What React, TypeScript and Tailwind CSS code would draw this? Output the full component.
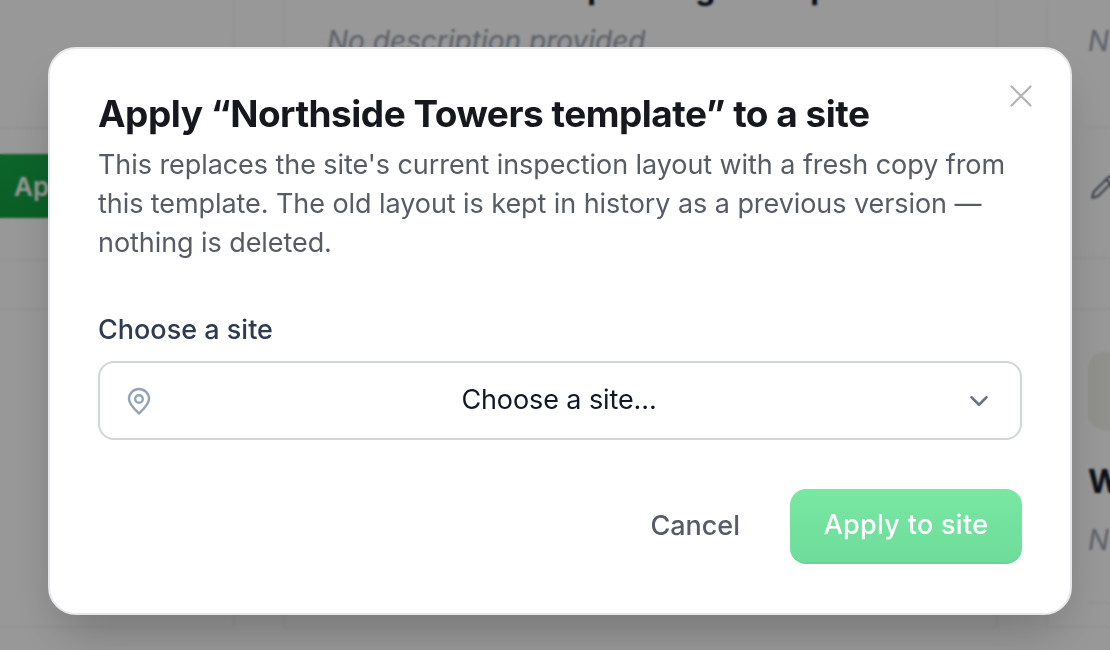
import { ChevronDown, Pencil, X } from 'lucide-react';

const FONT = 'font-["Inter",sans-serif]';

function PinIcon() {
  return (
    <svg viewBox="0 0 24 28" fill="none" stroke="currentColor" strokeWidth="2.4" className="w-[24px] h-[28px] text-[#94a3b8]">
      <path d="M12 26.5c-1-1.2-10-8.6-10-14.5a10 10 0 0 1 20 0c0 5.900-9 13.300-10 14.500Z" strokeLinejoin="round" />
      <circle cx="12" cy="12" r="3.800" />
    </svg>
  );
}

function BackgroundPage() {
  return (
    <div className="h-[650px] overflow-hidden bg-[#fdfdfd] grid grid-cols-[235px_715px_1fr] gap-x-[48px] items-start">
      <div className="flex flex-col">
        <div className="h-[129px] border-b-2 border-r-2 border-gray-100" />
        <div className="h-[132px] border-b-2 border-r-2 border-gray-100 pt-[25px]">
          <span className="flex items-center h-[64px] w-[120px] bg-gradient-to-b from-[#15a846] to-[#129c40] rounded-r-xl px-[14px] text-[26px] font-semibold text-white">Apply</span>
        </div>
        <div className="h-[47px]" />
        <div className="h-[320px] border-y-2 border-r-2 border-gray-100" />
      </div>
      <div className="flex flex-col">
        <div className="h-[261px] border-x-2 border-b-2 border-gray-100 px-[42px]">
          <p className="-mt-[30px] text-[32px] leading-[36px] font-bold text-gray-900 whitespace-nowrap">Harbor Lane Shop Dining and Spa</p>
          <p className="mt-[17px] text-[28px] leading-[36px] italic text-gray-400 whitespace-nowrap">No description provided</p>
        </div>
        <div className="h-[47px]" />
        <div className="h-[320px] border-x-2 border-y-2 border-gray-100" />
      </div>
      <div className="flex flex-col">
        <div className="h-[259px] border-l-2 border-b-2 border-gray-100 rounded-bl-2xl pl-[40px] flex flex-col">
          <p className="mt-[23px] text-[28px] leading-[36px] italic text-gray-400 whitespace-nowrap">No description</p>
          <div className="mt-[67px] border-t-2 border-gray-100 pt-[46px]">
            <Pencil className="w-[26px] h-[26px] ml-[2px] text-gray-500" />
          </div>
        </div>
        <div className="h-[49px]" />
        <div className="h-[320px] border-l-2 border-y-2 border-gray-100 pl-[40px] pt-[42px] flex flex-col">
          <div className="w-[80px] h-[78px] rounded-2xl bg-[#f0f0ea]" />
          <p className="mt-[32px] text-[32px] leading-[40px] font-bold text-gray-900 whitespace-nowrap">Westside</p>
          <p className="mt-[20px] text-[28px] leading-[36px] italic text-gray-400 whitespace-nowrap">No description</p>
          <div className="mt-[44px] border-t-2 border-gray-100" />
        </div>
      </div>
    </div>
  );
}

export default function App() {
  return (
    <div className={`relative h-[650px] w-[1110px] overflow-hidden ${FONT}`}>
      <BackgroundPage />
      <div className="absolute inset-0 bg-black/40 backdrop-blur-[1px] flex items-start justify-center pt-[47px] pl-[10px]">
        <div className="relative w-[1024px] h-[568px] bg-white rounded-[28px] border-2 border-gray-200 shadow-2xl px-[48px] pt-[45px]">
          <button className="absolute right-[30px] top-[28px] text-[#b5b5b5]">
            <X className="w-[38px] h-[38px]" strokeWidth={1.5} />
          </button>
          <h2 className="text-[37px] leading-[40px] font-bold tracking-[-0.5px] text-[#16181d] whitespace-nowrap">
            Apply “Northside Towers template” to a site
          </h2>
          <p className="mt-[11px] text-[27px] leading-[39px] tracking-[-0.07px] text-[#565b65]">
            This replaces the site's current inspection layout with a fresh copy from this template. The old layout is kept in history as a previous version — nothing is deleted.
          </p>
          <label className="block mt-[50px] text-[27px] leading-[36px] font-medium text-[#2f3b52]">Choose a site</label>
          <div className="mt-[13px] h-[79px] flex items-center rounded-[16px] border-2 border-gray-300 pl-[27px] pr-[26px]">
            <PinIcon />
            <span className="flex-1 ml-[3px] text-center text-[27px] tracking-[-0.1px] text-gray-900">Choose a site...</span>
            <ChevronDown className="w-[30px] h-[30px] text-gray-500" strokeWidth={2} />
          </div>
          <div className="mt-[49px] flex justify-end items-center gap-[50px]">
            <span className="text-[27px] font-medium text-[#565b65]">Cancel</span>
            <span className="flex items-center justify-center h-[75px] w-[232px] rounded-[16px] bg-gradient-to-b from-[#78e8a2] to-[#6fdc9b] border-b-2 border-[#6ad495] text-[27px] tracking-[0.3px] font-medium text-white">Apply to site</span>
          </div>
        </div>
      </div>
    </div>
  );
}
